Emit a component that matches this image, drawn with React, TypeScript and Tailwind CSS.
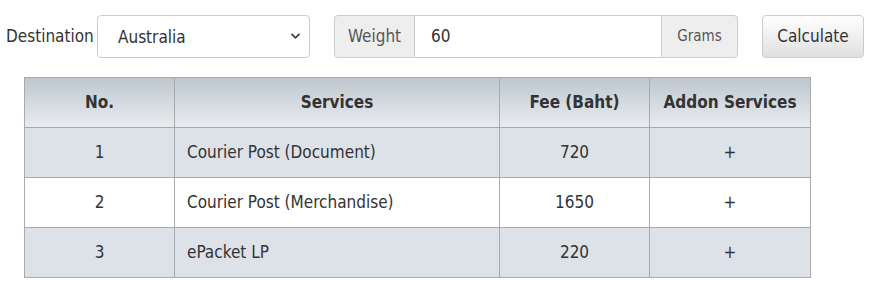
import React, { useState } from 'react';

interface ServiceRow {
  no: number;
  name: string;
  fee: number;
}

const rows: ServiceRow[] = [
  { no: 1, name: 'Courier Post (Document)', fee: 720 },
  { no: 2, name: 'Courier Post (Merchandise)', fee: 1650 },
  { no: 3, name: 'ePacket LP', fee: 220 },
];

const font = '[font-family:"DejaVu_Sans_Condensed","DejaVu_Sans",sans-serif] [font-stretch:condensed]';

const App: React.FC = () => {
  const [destination, setDestination] = useState('Australia');
  const [weight, setWeight] = useState('60');

  return (
    <div className={`w-[871px] h-[294px] bg-white text-[#333] ${font}`}>
      <div className="flex items-center pt-[15px] pl-[6px]">
        <label className="w-[91px] text-[17px] whitespace-nowrap">Destination</label>
        <div className="relative w-[213px] h-[43px]">
          <select
            value={destination}
            onChange={(e) => setDestination(e.target.value)}
            className="appearance-none w-full h-full border border-[#ccc] rounded-[4px] bg-white pl-[20px] pt-[2px] text-[17px] text-[#333] outline-none"
          >
            <option>Australia</option>
            <option>Japan</option>
            <option>China</option>
          </select>
          <svg
            className="absolute right-[9px] top-[17px] pointer-events-none"
            width="11"
            height="8"
            viewBox="0 0 11 8"
          >
            <path d="M1.5 1.8 L5.5 5.8 L9.5 1.8" stroke="#444" strokeWidth="1.8" fill="none" />
          </svg>
        </div>

        <div className="flex ml-[24px] h-[43px]">
          <span className="flex items-center w-[81px] justify-center border border-[#ccc] rounded-l-[4px] bg-[#eee] text-[17px] text-[#555]">
            Weight
          </span>
          <input
            value={weight}
            onChange={(e) => setWeight(e.target.value)}
            className="w-[246px] border-y border-[#ccc] px-[16px] text-[17px] text-[#333] outline-none"
          />
          <span className="flex items-center w-[77px] justify-center border border-[#ccc] rounded-r-[4px] bg-[#eee] text-[15px] text-[#555]">
            Grams
          </span>
        </div>

        <button className="ml-[24px] w-[102px] h-[43px] border border-[#ccc] rounded-[4px] bg-gradient-to-b from-white to-[#e0e0e0] text-[17px] text-[#333]">
          Calculate
        </button>
      </div>

      <table className="ml-[24px] mt-[19px] border-collapse text-[17px]">
        <thead>
          <tr className="h-[50px] bg-gradient-to-b from-[#bec7cf] to-[#eaedf0]">
            <th className="w-[150px] border border-[#aaa] font-bold">No.</th>
            <th className="w-[325px] border border-[#aaa] font-bold">Services</th>
            <th className="w-[150px] border border-[#aaa] font-bold">Fee (Baht)</th>
            <th className="w-[161px] border border-[#aaa] font-bold">Addon Services</th>
          </tr>
        </thead>
        <tbody>
          {rows.map((row) => (
            <tr key={row.no} className={`h-[50px] ${row.no % 2 === 1 ? 'bg-[#dce2e8]' : 'bg-white'}`}>
              <td className="border border-[#aaa] text-center">{row.no}</td>
              <td className="border border-[#aaa] pl-[12px]">{row.name}</td>
              <td className="border border-[#aaa] text-center">{row.fee}</td>
              <td className="border border-[#aaa] text-center">+</td>
            </tr>
          ))}
        </tbody>
      </table>
    </div>
  );
};

export default App;
